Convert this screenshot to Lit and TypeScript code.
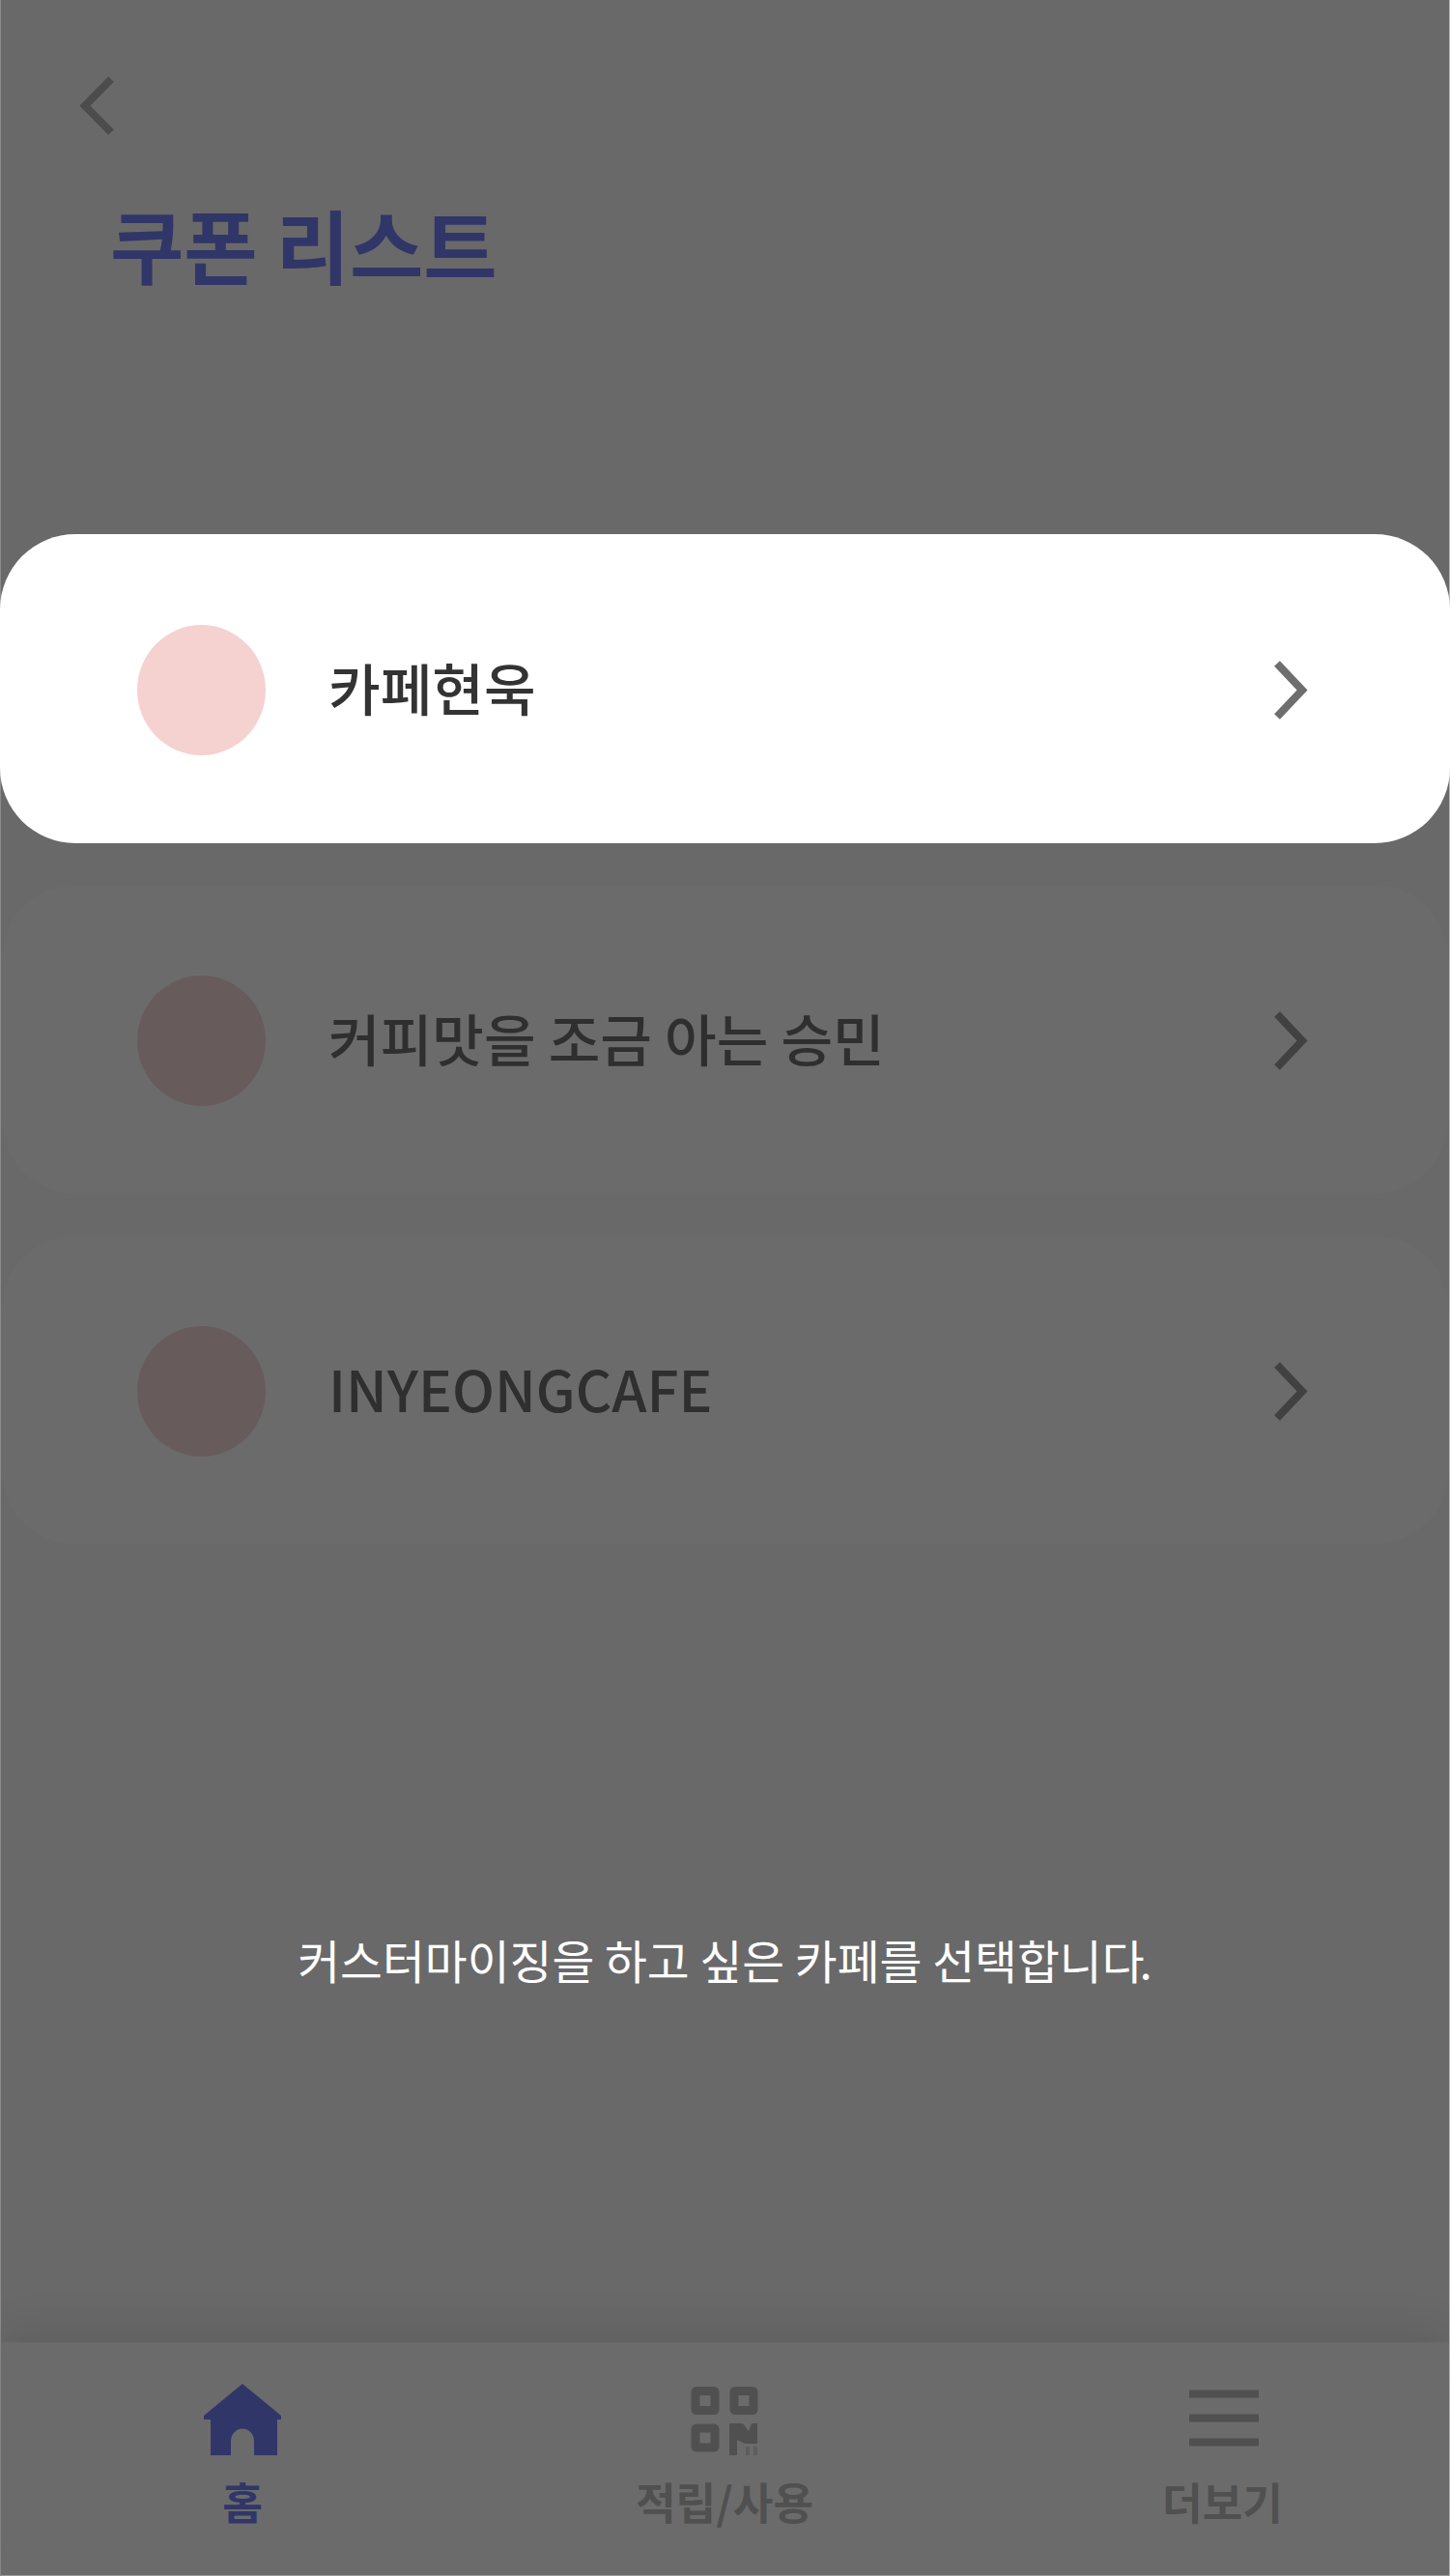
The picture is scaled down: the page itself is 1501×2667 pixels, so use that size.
import { LitElement, html, css, svg } from "lit";
import { customElement, property } from "lit/decorators.js";

@customElement("cafe-row")
class CafeRow extends LitElement {
  @property() name = "";

  static styles = css`
    :host {
      display: flex;
      align-items: center;
      box-sizing: border-box;
      height: 320px;
      margin: 0 1px;
      padding: 2px 145px 0 141px;
      border-radius: 78px;
      background: #6b6b6b;
      color: #2f2f2f;
      --arrow: #414141;
      --dot: #675c5b;
    }
    :host([selected]) {
      margin: 0;
      padding: 2px 146px 0 142px;
      background: #fff;
      color: #333;
      --arrow: #6e6e6e;
      --dot: #f5d2d0;
    }
    .dot {
      width: 133px;
      height: 135px;
      border-radius: 50%;
      background: var(--dot);
      flex: none;
    }
    .name {
      flex: 1;
      margin: -6px 0 0 65px;
      font-size: 58.3px;
      font-weight: 500;
      line-height: 84px;
      white-space: nowrap;
    }
    .arrow {
      display: block;
      width: 38px;
      height: 64px;
      flex: none;
      stroke: var(--arrow);
    }
  `;

  render() {
    return html`
      <span class="dot"></span>
      <span class="name">${this.name}</span>
      <svg class="arrow" viewBox="0 0 38 64" fill="none" stroke-width="8">
        <path d="M5 5 L31 32.500 L5 60" />
      </svg>
    `;
  }
}

const homeIcon = svg`<svg width="84" height="76" viewBox="0 0 84 76" fill="currentColor">
  <path d="M42 1 L82 34 V38 H78 V75 H54 V61 C54 43 30 43 30 61 V75 H9 V38 H2 V34 Z" />
</svg>`;

const codeIcon = svg`<svg width="76" height="76" viewBox="0 0 76 76" fill="none" stroke="currentColor" stroke-width="9">
  <rect x="8" y="8.500" width="20" height="20" rx="1" />
  <rect x="48" y="8.500" width="20" height="20" rx="1" />
  <rect x="8" y="47" width="20" height="20" rx="1" />
  <path stroke="none" fill="currentColor" d="M43 42 H57 L63 50 L66 42 H72 V63 H59 L51 59 V75 H43 Z" />
  <path stroke-width="4" stroke-opacity=".5" d="M62 66 V75 M70 66 V75" />
</svg>`;

const menuIcon = svg`<svg width="76" height="76" viewBox="0 0 76 76" fill="none" stroke="currentColor" stroke-width="8">
  <path d="M3 11.500 H75 M3 36.500 H75 M3 61.500 H75" />
</svg>`;

@customElement("app-root")
class AppRoot extends LitElement {
  static styles = css`
    :host {
      display: block;
      font-family: "Noto Sans CJK KR", "Noto Sans", sans-serif;
    }
    .screen {
      display: flex;
      flex-direction: column;
      box-sizing: border-box;
      width: 1501px;
      height: 2667px;
      overflow: hidden;
      background: linear-gradient(#8c8c8c, #8c8c8c) left / 1px 100% no-repeat,
        linear-gradient(#b4b4b4, #b4b4b4) right / 1px 100% no-repeat, #696969;
    }
    .head {
      height: 553.3px;
      flex: none;
      box-sizing: border-box;
      padding: 78px 0 0 82px;
    }
    .back {
      display: block;
      width: 36px;
      height: 63px;
    }
    .title {
      margin: 49px 0 0 32px;
      color: #313668;
      font-size: 83px;
      font-weight: 700;
      line-height: 124px;
      white-space: nowrap;
    }
    .list {
      display: flex;
      flex-direction: column;
      gap: 43.1px;
    }
    .hint {
      flex: 1;
      margin: 0;
      padding: 395px 0 0 0;
      text-align: center;
      color: #fff;
      font-size: 47.7px;
      font-weight: 400;
      line-height: 70px;
      white-space: nowrap;
    }
    .tight {
      letter-spacing: -5px;
    }
    .nav {
      display: grid;
      grid-template-columns: 500px 498px 1fr;
      height: 242px;
      flex: none;
      box-sizing: border-box;
      margin: 0 1px;
      background: #6b6b6b;
      border-bottom: 1px solid #999;
      box-shadow: 0 -6px 46px rgba(0, 0, 0, 0.12);
      color: #505050;
    }
    .tab {
      display: flex;
      flex-direction: column;
      align-items: center;
      padding-top: 42px;
      font-size: 45.3px;
      font-weight: 700;
      line-height: 66px;
    }
    .tab svg {
      display: block;
      margin-bottom: 13px;
    }
    .home {
      color: #313668;
    }
    .more {
      padding-left: 32px;
    }
  `;

  render() {
    return html`
      <main class="screen">
        <header class="head">
          <svg class="back" viewBox="0 0 36 63" fill="none" stroke="#4c4c4c" stroke-width="8">
            <path d="M33 4 L6 31.5 L33 59" />
          </svg>
          <h1 class="title">쿠폰 리스트</h1>
        </header>
        <section class="list">
          <cafe-row selected name="카페현욱"></cafe-row>
          <cafe-row name="커피맛을 조금 아는 승민"></cafe-row>
          <cafe-row name="INYEONGCAFE"></cafe-row>
        </section>
        <p class="hint">커스터마이징을 하고 싶은 카페를 선택합니<span class="tight">다</span>.</p>
        <nav class="nav">
          <div class="tab home">${homeIcon}<span>홈</span></div>
          <div class="tab">${codeIcon}<span>적립/사용</span></div>
          <div class="tab more">${menuIcon}<span>더보기</span></div>
        </nav>
      </main>
    `;
  }
}
